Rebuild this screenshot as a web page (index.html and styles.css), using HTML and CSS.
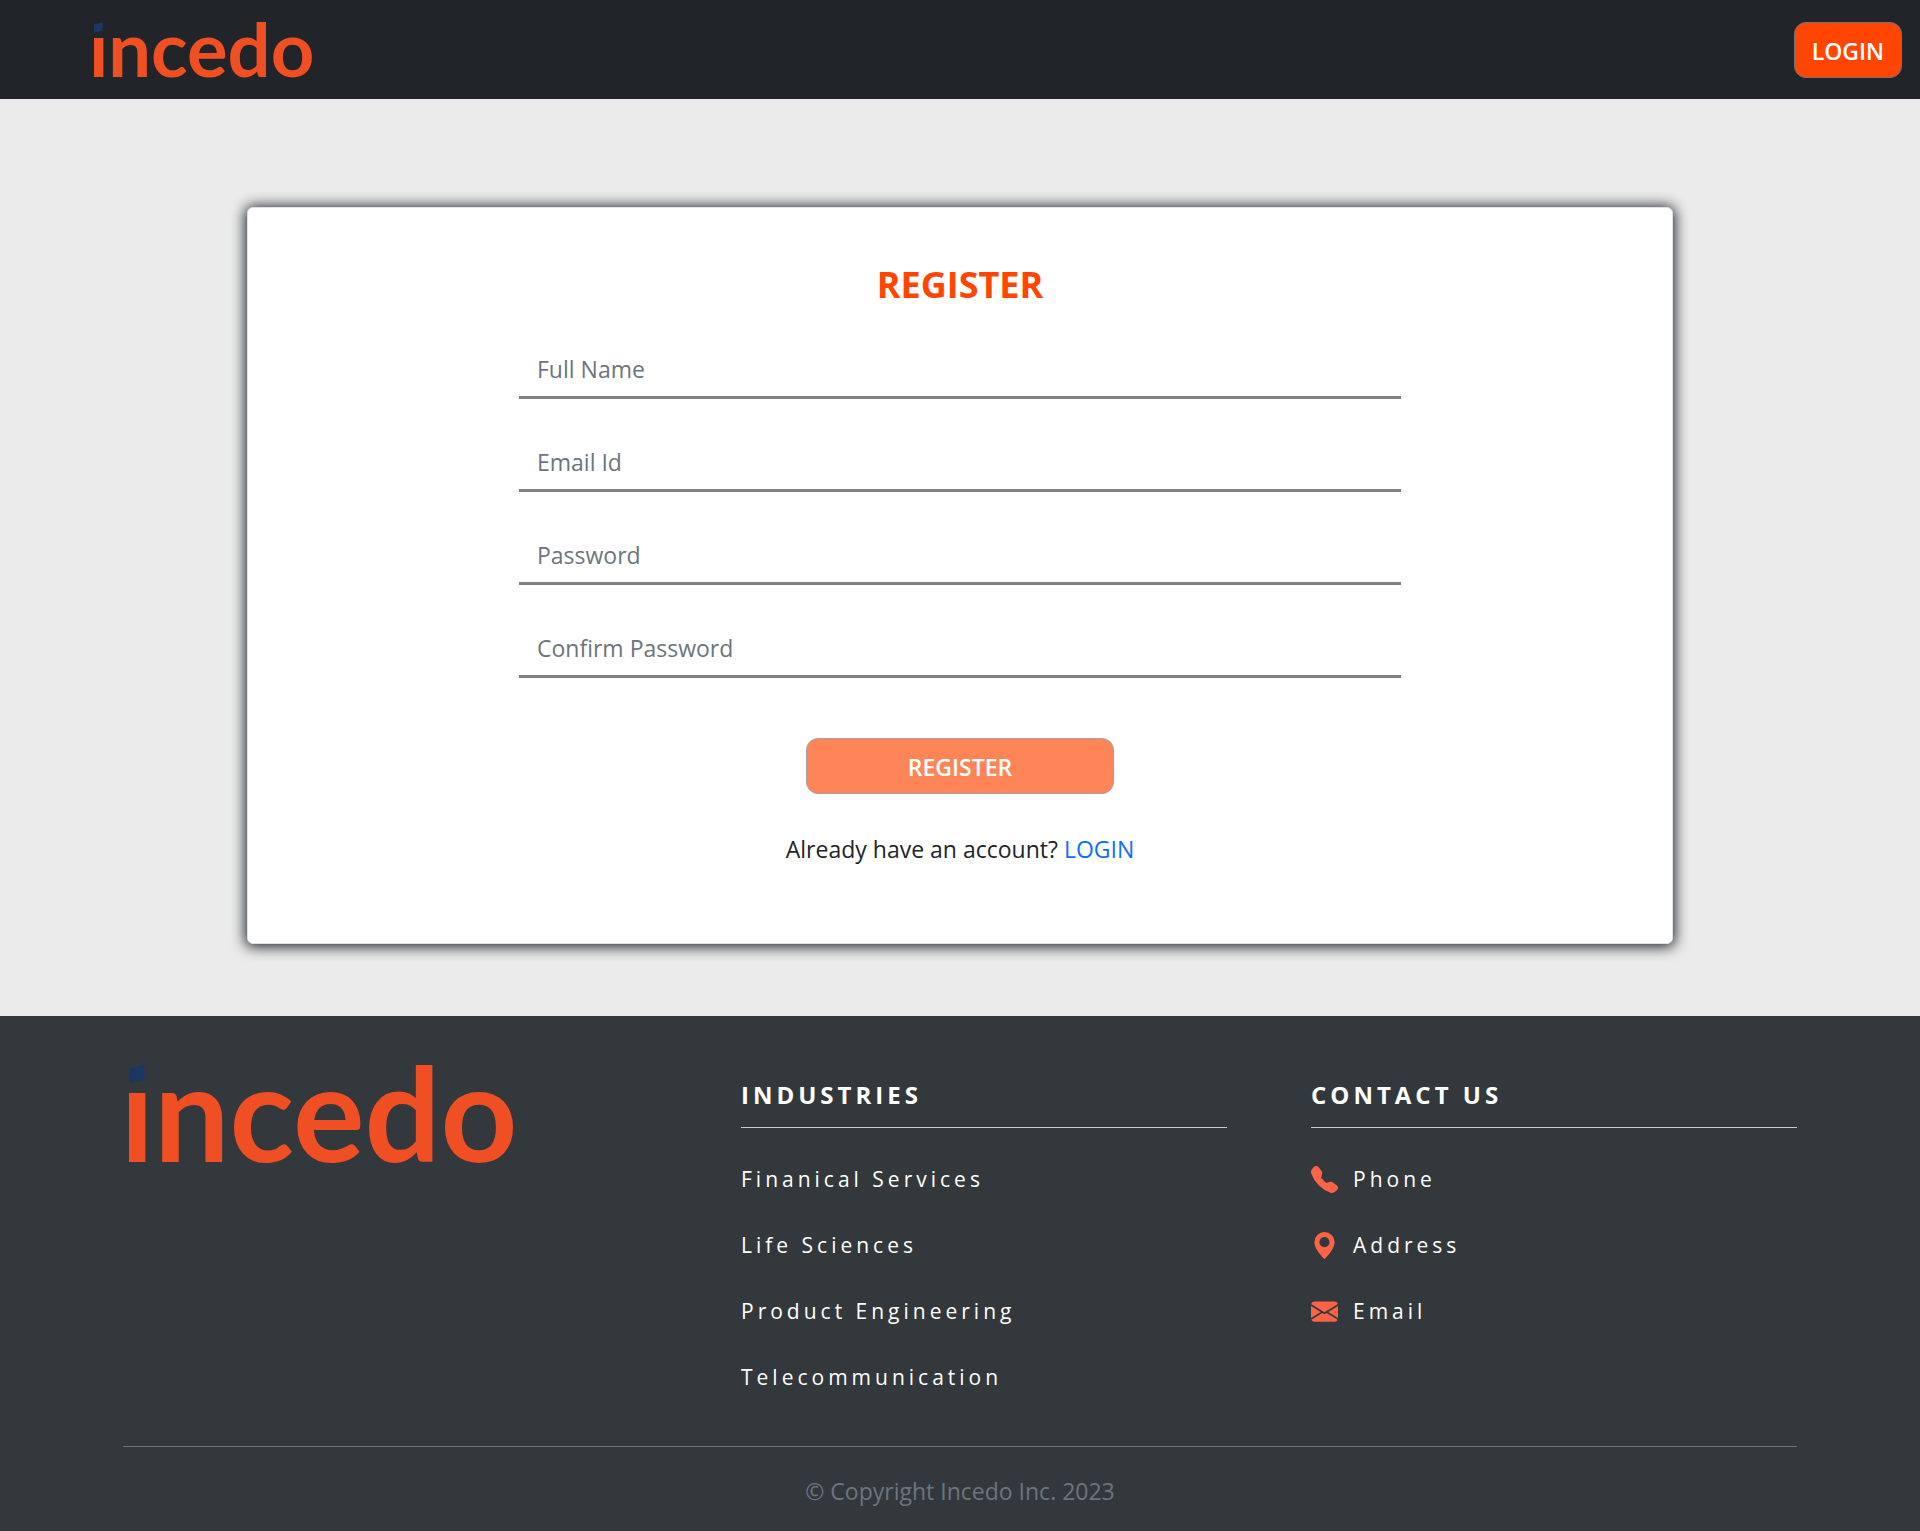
FILE: index.html
```html
<!DOCTYPE html>
<html lang="en">
<head>
<meta charset="utf-8">
<meta name="viewport" content="width=device-width, initial-scale=1">
<title>Incedo - Register</title>
<link rel="stylesheet" href="styles.css">
</head>
<body>
<svg class="defs" width="0" height="0" aria-hidden="true">
  <defs>
    <linearGradient id="stem" gradientUnits="userSpaceOnUse" x1="0" y1="0" x2="0" y2="98">
      <stop offset="0.26" stop-color="#f04e23" stop-opacity="0"/>
      <stop offset="0.26" stop-color="#f04e23"/>
    </linearGradient>
    <symbol id="logo" viewBox="0 0 386 98">
      <path fill="#1c3664" d="M0 3.500L15.500 0V14.500L0 18Z"/>
      <text class="wordmark" x="-9" y="97"><tspan fill="url(#stem)">i</tspan>ncedo</text>
    </symbol>
  </defs>
</svg>

<header class="navbar">
  <a class="brand" href="#" aria-label="Incedo home"><svg class="brand-logo"><use href="#logo"/></svg></a>
  <button class="btn" type="button">LOGIN</button>
</header>

<main class="page">
  <section class="card">
    <h1 class="title">REGISTER</h1>
    <form class="form">
      <input class="field" type="text" placeholder="Full Name" aria-label="Full Name">
      <input class="field" type="email" placeholder="Email Id" aria-label="Email Id">
      <input class="field" type="password" placeholder="Password" aria-label="Password">
      <input class="field" type="password" placeholder="Confirm Password" aria-label="Confirm Password">
      <button class="btn submit" type="submit" disabled>REGISTER</button>
    </form>
    <p class="switch">Already have an account? <a class="link" href="#">LOGIN</a></p>
  </section>
</main>

<footer class="footer">
  <div class="columns">
    <div class="footer-brand"><svg class="footer-logo"><use href="#logo"/></svg></div>
    <section>
      <h2 class="heading">INDUSTRIES</h2>
      <ul class="list">
        <li><a class="item" href="#">Finanical Services</a></li>
        <li><a class="item" href="#">Life Sciences</a></li>
        <li><a class="item" href="#">Product Engineering</a></li>
        <li><a class="item" href="#">Telecommunication</a></li>
      </ul>
    </section>
    <section>
      <h2 class="heading">CONTACT US</h2>
      <ul class="list">
        <li><a class="item" href="#"><svg class="icon" viewBox="0 0 16 16"><path fill-rule="evenodd" d="M1.885.511a1.745 1.745 0 0 1 2.610.163L6.290 2.980c.329.423.445.974.315 1.494l-.547 2.190a.680.680 0 0 0 .178.643l2.457 2.457a.680.680 0 0 0 .644.178l2.189-.547a1.750 1.750 0 0 1 1.494.315l2.306 1.794c.829.645.905 1.870.163 2.611l-1.034 1.034c-.740.740-1.846 1.065-2.877.702a18.600 18.600 0 0 1-7.010-4.420 18.600 18.600 0 0 1-4.420-7.009c-.362-1.030-.037-2.137.703-2.877z"/></svg>Phone</a></li>
        <li><a class="item" href="#"><svg class="icon" viewBox="0 0 16 16"><path d="M8 16s6-5.686 6-10A6 6 0 0 0 2 6c0 4.314 6 10 6 10m0-7a3 3 0 1 1 0-6 3 3 0 0 1 0 6"/></svg>Address</a></li>
        <li><a class="item" href="#"><svg class="icon" viewBox="0 0 16 16"><path d="M.050 3.555A2 2 0 0 1 2 2h12a2 2 0 0 1 1.950 1.555L8 8.414zM0 4.697v7.104l5.803-3.558zM6.761 8.830l-6.570 4.027A2 2 0 0 0 2 14h12a2 2 0 0 0 1.808-1.144l-6.570-4.027L8 9.586zm3.436-.586L16 11.801V4.697z"/></svg>Email</a></li>
      </ul>
    </section>
  </div>
  <p class="copyright">© Copyright Incedo Inc. 2023</p>
</footer>
</body>
</html>
```
FILE: styles.css
```css
* { box-sizing: border-box; }

body {
  margin: 0;
  min-height: 100vh;
  display: flex;
  flex-direction: column;
  background: #ebebeb;
  color: #212529;
  font: 400 23px/36px "Open Sans", "Noto Sans", sans-serif;
}

.defs { position: absolute; }

.wordmark {
  font: 700 134px Lato, sans-serif;
  fill: #f04e23;
}

.navbar {
  display: flex;
  align-items: center;
  justify-content: space-between;
  padding: 22px 18px 21px 94px;
  background: #212529;
}

.brand { display: flex; }

.brand-logo {
  width: 219px;
  height: 56px;
  overflow: visible;
}

.btn {
  height: 56px;
  padding: 1px 17px 0;
  border: 1px solid #6c757d;
  border-radius: 12px;
  background: #ff4500;
  color: #fff;
  font: inherit;
  font-weight: 600;
}

.page { padding: 108px 247px 72px; }

.card {
  display: flex;
  flex-direction: column;
  align-items: center;
  padding: 53px 20px 76px;
  border: 1px solid #dee2e6;
  border-radius: 6px;
  background: #fff;
  box-shadow: 0 1px 14px 2px #212529;
}

.title {
  margin: 0 0 33px;
  color: #ff4500;
  font-size: 36px;
  font-weight: 700;
  line-height: 48px;
}

.form {
  display: flex;
  flex-direction: column;
  align-items: center;
  gap: 36px;
  width: 882px;
  max-width: 100%;
}

.field {
  width: 100%;
  height: 57px;
  padding: 0 18px;
  border: 0;
  border-bottom: 3px solid #808080;
  background: transparent;
  color: #212529;
  font: inherit;
}

.field::placeholder {
  color: #6c757d;
  opacity: 1;
}

.submit {
  width: 35%;
  margin-top: 24px;
  opacity: .65;
}

.switch { margin: 37px 0 0; }

.link {
  color: #0d6efd;
  text-decoration: none;
}

.footer {
  flex: 1;
  padding: 49px 123px 18px;
  background: #33383c;
}

.columns {
  display: grid;
  grid-template-columns: 534fr 486fr 486fr;
  gap: 84px;
  padding-bottom: 51px;
  border-bottom: 1px solid #6d7174;
}

.footer-brand { padding-left: 6px; }

.footer-logo {
  display: block;
  width: 386px;
  height: 98px;
  overflow: visible;
}

.heading {
  margin: 12px 0 33px;
  padding-bottom: 14px;
  border-bottom: 1px solid #c8cacb;
  color: #fff;
  font-size: 24px;
  font-weight: 700;
  line-height: 36px;
  letter-spacing: 4px;
}

.list {
  display: grid;
  gap: 30px;
  margin: 0;
  padding: 0;
  list-style: none;
}

.item {
  display: flex;
  align-items: center;
  gap: 15px;
  color: #fff;
  font-size: 21px;
  line-height: 36px;
  letter-spacing: 4px;
  text-decoration: none;
}

.icon {
  width: 27px;
  height: 27px;
  fill: #ff6347;
}

.copyright {
  margin: 26px 0 0;
  color: #6c757d;
  text-align: center;
}
```
